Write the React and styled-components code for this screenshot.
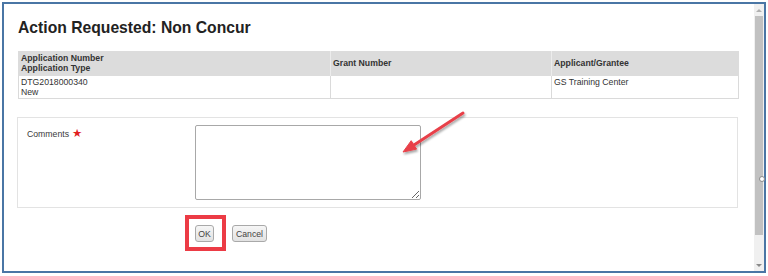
import React from "react";
import styled, { createGlobalStyle } from "styled-components";

const Global = createGlobalStyle`
  html, body { margin: 0; padding: 0; background: #fff; }
  body { font-family: "Liberation Sans", Arial, sans-serif; }
`;

const Frame = styled.div`
  position: relative;
  box-sizing: border-box;
  margin: 2px 0 0 2px;
  width: 764px;
  height: 271px;
  border: 2px solid #4a76a5;
  display: flex;
  background: #fff;
`;

const Content = styled.div`
  flex: 1;
  min-width: 0;
  padding: 15px 16px 0 14px;
`;

const Title = styled.h1`
  margin: 0 0 14px;
  font-size: 15.7px;
  line-height: 18px;
  font-weight: bold;
  color: #222;
`;

const Table = styled.table`
  border-collapse: collapse;
  width: 720px;
  table-layout: fixed;
  font-size: 8.7px;
  line-height: 10px;
  color: #333;
`;

const Th = styled.th`
  background: #dcdcdc;
  text-align: left;
  vertical-align: middle;
  font-weight: bold;
  height: 25px;
  box-sizing: border-box;
  padding: 2px 2px 3px 2px;
  border-left: 1px solid ${(p) => (p.$first ? "#dcdcdc" : "#ececec")};
`;

const Td = styled.td`
  vertical-align: top;
  height: 22px;
  box-sizing: border-box;
  padding: 1px 2px 1px 2px;
  border: 1px solid #dadada;
  border-top: none;
`;

const FormBox = styled.div`
  margin: 18px 0 0 -1px;
  border: 1px solid #e3e3e3;
  padding: 7px 9px;
  display: grid;
  grid-template-columns: 168px 226px;
`;

const Label = styled.div`
  padding-top: 3px;
  font-size: 8.7px;
  line-height: 10px;
  color: #3a3a3a;
`;

const Star = styled.span`
  color: #e0201f;
  font-family: "DejaVu Sans", sans-serif;
  font-size: 11.5px;
  margin-left: 3px;
`;

const TextArea = styled.textarea`
  box-sizing: border-box;
  width: 226px;
  height: 75px;
  margin: 0;
  border: 1px solid #a8a8a8;
  border-radius: 2px;
  background: #fff;
  display: block;
`;

const ButtonRow = styled.div`
  margin-top: 17px;
  padding-left: 177px;
  display: flex;
  gap: 18px;
`;

const ButtonWrap = styled.span`
  position: relative;
  display: inline-flex;
`;

const Highlight = styled.span`
  position: absolute;
  left: -10px;
  right: -12px;
  top: -10px;
  bottom: -9px;
  border: 4px solid #ec3b45;
  pointer-events: none;
`;

const Button = styled.button`
  box-sizing: border-box;
  width: ${(p) => p.$w}px;
  height: 17px;
  padding: 0;
  border: 1px solid #a9a9a9;
  border-radius: 3px;
  background: linear-gradient(#f6f6f6, #e2e2e2);
  font-family: "Liberation Sans", Arial, sans-serif;
  font-size: 8.7px;
  color: #444;
`;

const Scrollbar = styled.div`
  width: 10px;
  background: #f0f0f0;
  display: flex;
  flex-direction: column;
`;

const ScrollArrow = styled.div`
  height: 12px;
  display: flex;
  align-items: center;
  justify-content: center;
  &::before {
    content: "";
    border-left: 3px solid transparent;
    border-right: 3px solid transparent;
    ${(p) =>
      p.$down
        ? "border-top: 3px solid #8a8a8a;"
        : "border-bottom: 3px solid #b0b0b0;"}
  }
`;

const Thumb = styled.div`
  height: 219px;
  margin: 0 1px;
  background: #c1c1c1;
`;

const Track = styled.div`
  flex: 1;
`;

const Grip = styled.span`
  position: absolute;
  left: 755px;
  top: 172px;
  width: 4px;
  height: 4px;
  border: 1px solid #8a8a8a;
  border-radius: 50%;
  background: #fff;
`;

const ArrowSvg = styled.svg`
  position: absolute;
  left: 391px;
  top: 101px;
  overflow: visible;
  pointer-events: none;
`;

export default function App() {
  return (
    <>
      <Global />
      <Frame>
        <Content>
          <Title>Action Requested: Non Concur</Title>
          <Table>
            <colgroup>
              <col style={{ width: 312 }} />
              <col style={{ width: 221 }} />
              <col style={{ width: 187 }} />
            </colgroup>
            <thead>
              <tr>
                <Th $first>
                  Application Number
                  <br />
                  Application Type
                </Th>
                <Th>Grant Number</Th>
                <Th>Applicant/Grantee</Th>
              </tr>
            </thead>
            <tbody>
              <tr>
                <Td>
                  DTG2018000340
                  <br />
                  New
                </Td>
                <Td></Td>
                <Td>GS Training Center</Td>
              </tr>
            </tbody>
          </Table>
          <FormBox>
            <Label>
              Comments<Star>★</Star>
            </Label>
            <TextArea />
          </FormBox>
          <ButtonRow>
            <ButtonWrap>
              <Button $w={19}>OK</Button>
              <Highlight />
            </ButtonWrap>
            <ButtonWrap>
              <Button $w={35}>Cancel</Button>
            </ButtonWrap>
          </ButtonRow>
        </Content>
        <Scrollbar>
          <ScrollArrow />
          <Thumb />
          <Track />
          <ScrollArrow $down />
        </Scrollbar>
        <Grip />
        <ArrowSvg width="80" height="56" viewBox="0 0 80 56">
          <defs>
            <filter id="sh" x="-30%" y="-30%" width="160%" height="160%">
              <feDropShadow dx="1" dy="2" stdDeviation="1.2" floodColor="#000" floodOpacity="0.35" />
            </filter>
          </defs>
          <g filter="url(#sh)" fill="#e8414a" stroke="#e8414a">
            <line x1="68" y1="8" x2="19" y2="40" strokeWidth="3" strokeLinecap="round" />
            <polygon points="8,47 21.6,44.1 16.2,35.7" strokeWidth="1" strokeLinejoin="round" />
          </g>
        </ArrowSvg>
      </Frame>
    </>
  );
}
